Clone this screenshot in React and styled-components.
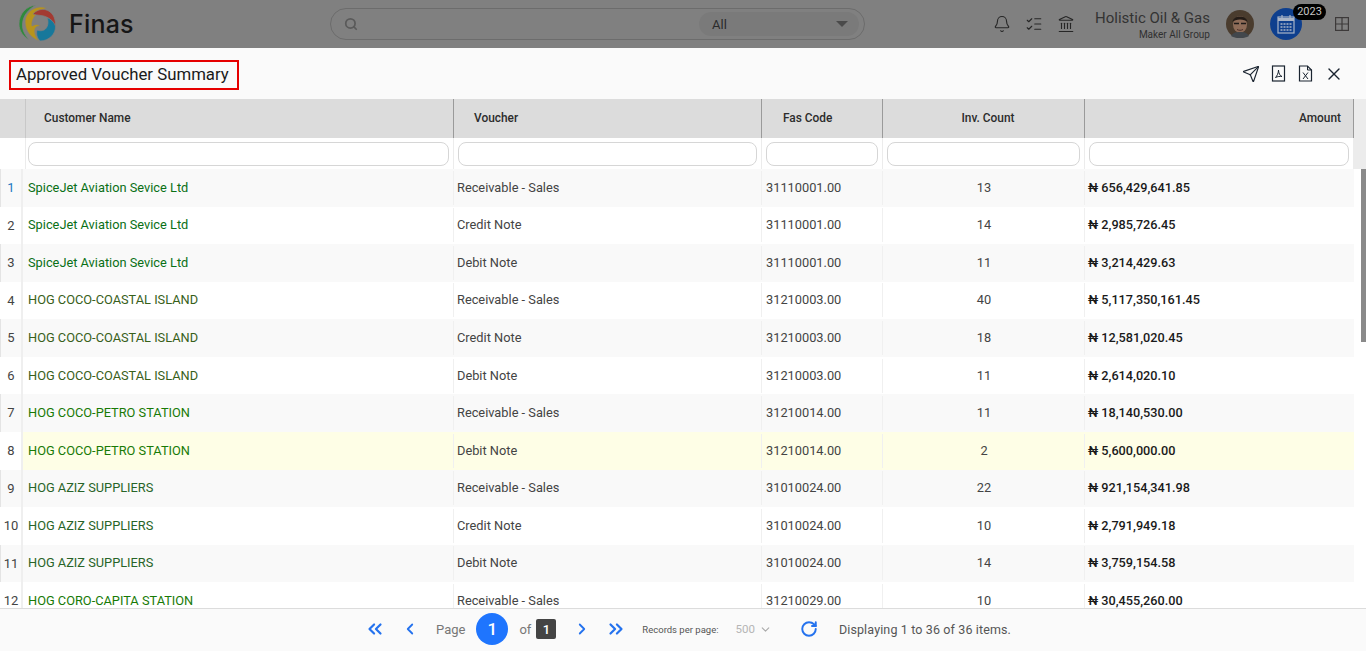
import React from "react";
import styled, { createGlobalStyle } from "styled-components";
import {
  Bell,
  ListChecks,
  Landmark,
  Search,
  ChevronDown,
  ChevronsLeft,
  ChevronLeft,
  ChevronRight,
  ChevronsRight,
  RotateCw,
  Send,
  X,
} from "lucide-react";

const GlobalStyle = createGlobalStyle`
  html, body, #root {
    margin: 0;
    height: 100%;
  }
  body {
    font-family: Roboto, "Liberation Sans", sans-serif;
    overflow: hidden;
    background: #fff;
  }
`;

const Page = styled.div`
  height: 100vh;
  display: flex;
  flex-direction: column;
`;

// top bar (dimmed by the open modal)
const TopBar = styled.header`
  height: 48px;
  flex: none;
  background: #808080;
  display: flex;
  align-items: center;
`;

const Brand = styled.div`
  width: 330px;
  flex: none;
  display: flex;
  align-items: center;
  gap: 13px;
  padding-left: 18px;
  box-sizing: border-box;
`;

const LogoMark = styled.svg`
  width: 38px;
  height: 38px;
  margin-top: -2px;
`;

const BrandName = styled.span`
  font-family: Inter, "Open Sans", sans-serif;
  font-size: 25px;
  font-weight: 500;
  letter-spacing: 0.2px;
  color: #161616;
`;

const SearchBar = styled.div`
  width: 535px;
  height: 32px;
  flex: none;
  box-sizing: border-box;
  border: 1px solid #6c6c6c;
  border-radius: 16px;
  display: flex;
  align-items: center;
  justify-content: space-between;
  padding: 0 5px 0 13px;
`;

const ScopeSelect = styled.div`
  width: 160px;
  height: 24px;
  box-sizing: border-box;
  border-radius: 12px;
  background: #7a7a7a;
  display: flex;
  align-items: center;
  justify-content: space-between;
  padding: 0 11px 0 13px;
  font-size: 13px;
  color: #2b2b2b;
`;

const Caret = styled.span`
  width: 0;
  height: 0;
  border-left: 6px solid transparent;
  border-right: 6px solid transparent;
  border-top: 6px solid #4a4a4a;
`;

const TopIcons = styled.div`
  margin-left: 128px;
  display: flex;
  align-items: center;
  gap: 14px;
  color: #262626;
`;

const UserInfo = styled.div`
  width: 130px;
  margin-left: 5px;
  padding-top: 2px;
  text-align: right;
`;

const UserName = styled.div`
  font-size: 15px;
  line-height: 18px;
  color: #333;
  white-space: nowrap;
`;

const UserRole = styled.div`
  font-size: 10px;
  line-height: 12px;
  margin-top: 2px;
  color: #303030;
`;

const Avatar = styled.svg`
  width: 28px;
  height: 28px;
  margin-left: 16px;
  flex: none;
`;

const YearButton = styled.div`
  position: relative;
  width: 32px;
  height: 32px;
  margin-left: 16px;
  flex: none;
  border-radius: 50%;
  background: #0e3f8e;
  display: flex;
  align-items: center;
  justify-content: center;
`;

const YearBadge = styled.span`
  position: absolute;
  top: -4px;
  left: 23px;
  width: 33px;
  height: 16px;
  border-radius: 8px;
  background: #000;
  color: #c4c4c4;
  font-size: 11px;
  line-height: 16px;
  text-align: center;
`;

const AppsIcon = styled.svg`
  width: 14px;
  height: 14px;
  margin-left: 33px;
  flex: none;
`;

// modal title
const TitleBar = styled.div`
  height: 51px;
  flex: none;
  box-sizing: border-box;
  background: #fafafa;
  display: flex;
  align-items: center;
  justify-content: space-between;
  padding: 0 22px 0 9px;
`;

const Title = styled.h1`
  margin: 2px 0 0;
  box-sizing: border-box;
  height: 30px;
  width: 230px;
  border: 2px solid #e60000;
  padding-left: 5px;
  font-size: 16.8px;
  font-weight: 400;
  line-height: 24px;
  white-space: nowrap;
  color: #1a1a1a;
`;

const Actions = styled.div`
  display: flex;
  align-items: center;
  gap: 10px;
  color: #1a2430;
`;

const FileIcon = styled.svg`
  width: 17px;
  height: 17px;
`;

// grid
const GridWrap = styled.div`
  flex: 1;
  min-height: 0;
  display: flex;
`;

const Grid = styled.div`
  width: 1354px;
  flex: none;
  display: flex;
  flex-direction: column;
  min-height: 0;
`;

const HeadRow = styled.div`
  height: 39px;
  flex: none;
  display: grid;
  grid-template-columns: 26px 428px 308px 121px 202px 269px;
  background: #dcdcdc;
`;

const HeadCell = styled.div`
  box-sizing: border-box;
  border-right: 1px solid ${(p) => (p.$first ? "#c8c8c8" : "#9a9a9a")};
  font-size: 11.9px;
  font-weight: 500;
  line-height: 38px;
  color: #2c2c2c;
  text-align: ${(p) => p.$align || "left"};
  padding-left: ${(p) => p.$pl || 0}px;
  padding-right: ${(p) => p.$pr || 0}px;
`;

const FilterRow = styled(HeadRow)`
  height: 31px;
  background: #fff;
`;

const FilterCell = styled.div`
  box-sizing: border-box;
  border-right: 1px solid #ececec;
  padding: 4px 4px 0 ${(p) => p.$pl || 4}px;
`;

const FilterInput = styled.input`
  display: block;
  width: 100%;
  height: 24px;
  box-sizing: border-box;
  border: 1px solid #d6d6d6;
  border-radius: 8px;
  background: #fff;
  outline: none;
`;

const Body = styled.div`
  flex: 1;
  min-height: 0;
  overflow: hidden;
`;

const Row = styled.div`
  height: 37.57px;
  display: grid;
  grid-template-columns: 23px 431px 308px 121px 202px 269px;
  align-items: center;
  font-size: 12.8px;
  color: #444;
  background: ${(p) => (p.$active ? "#fefee6" : p.$odd ? "#f9f9f9" : "#fff")};
`;

const IndexCell = styled.div`
  height: 100%;
  box-sizing: border-box;
  background: ${(p) => (p.$odd ? "#f9f9f9" : "#fff")};
  border-left: 1px solid ${(p) => (p.$odd ? "#e4e4e4" : "transparent")};
  border-right: 2px solid #efefef;
  color: ${(p) => (p.$first ? "#1a78c2" : "#444")};
  line-height: 37px;
  text-align: center;
  font-size: 13px;
`;

const Cell = styled.div`
  height: 34px;
  box-sizing: border-box;
  line-height: 34px;
  white-space: nowrap;
  border-right: 1px solid ${(p) => (p.$last ? "transparent" : "#f0f0f0")};
  padding-left: ${(p) => p.$pl || 3}px;
  text-align: ${(p) => p.$align || "left"};
`;

const NameCell = styled(Cell)`
  color: ${(p) => p.$tone};
  padding-left: 5px;
`;

const AmountCell = styled(Cell)`
  color: #1a1a1a;
  font-size: 12.7px;
  font-weight: 500;
`;

const ScrollTrack = styled.div`
  flex: 1;
  display: flex;
  flex-direction: column;
  align-items: flex-end;
  background: #fff;
`;

const ScrollHead = styled.div`
  width: 100%;
  height: 70px;
  flex: none;
  background: #ececec;
`;

const ScrollThumb = styled.div`
  width: 5px;
  height: 173px;
  background: #8a8a8a;
`;

// pager
const Pager = styled.footer`
  height: 43px;
  flex: none;
  box-sizing: border-box;
  border-top: 1px solid #dcdcdc;
  background: #fafafa;
  display: flex;
  align-items: center;
  padding: 0 0 2px 364px;
  color: #777;
  font-size: 13px;
`;

const PagerIcon = styled.span`
  display: flex;
  color: #2472ee;
  margin-left: ${(p) => p.$ml || 0}px;
`;

const PageLabel = styled.span`
  margin-left: ${(p) => p.$ml || 0}px;
`;

const PageCurrent = styled.span`
  width: 32px;
  height: 32px;
  margin-left: 11px;
  border-radius: 50%;
  background: #1f75fe;
  color: #fff;
  font-size: 17px;
  font-weight: 500;
  display: flex;
  align-items: center;
  justify-content: center;
`;

const PageTotal = styled.span`
  width: 20px;
  height: 20px;
  margin-left: 5px;
  border-radius: 2px;
  background: #444;
  color: #fff;
  font-size: 13px;
  font-weight: 500;
  display: flex;
  align-items: center;
  justify-content: center;
`;

const PerPageLabel = styled.span`
  margin-left: 15px;
  font-size: 9.5px;
  color: #555;
`;

const PerPageValue = styled.span`
  margin-left: 17px;
  font-size: 11.5px;
  color: #b5b5b5;
  display: flex;
  align-items: center;
  gap: 4px;
`;

const Summary = styled.span`
  margin-left: 21px;
  font-size: 12.5px;
  letter-spacing: 0.13px;
  color: #555;
`;

const GREEN = "#0a7016";
const OLIVE = "#38601a";
const BRIGHT = "#187a06";
const MOSS = "#286428";

const rows = [
  ["SpiceJet Aviation Sevice Ltd", GREEN, "Receivable - Sales", "31110001.00", 13, "656,429,641.85"],
  ["SpiceJet Aviation Sevice Ltd", GREEN, "Credit Note", "31110001.00", 14, "2,985,726.45"],
  ["SpiceJet Aviation Sevice Ltd", GREEN, "Debit Note", "31110001.00", 11, "3,214,429.63"],
  ["HOG COCO-COASTAL ISLAND", OLIVE, "Receivable - Sales", "31210003.00", 40, "5,117,350,161.45"],
  ["HOG COCO-COASTAL ISLAND", OLIVE, "Credit Note", "31210003.00", 18, "12,581,020.45"],
  ["HOG COCO-COASTAL ISLAND", OLIVE, "Debit Note", "31210003.00", 11, "2,614,020.10"],
  ["HOG COCO-PETRO STATION", BRIGHT, "Receivable - Sales", "31210014.00", 11, "18,140,530.00"],
  ["HOG COCO-PETRO STATION", BRIGHT, "Debit Note", "31210014.00", 2, "5,600,000.00"],
  ["HOG AZIZ SUPPLIERS", MOSS, "Receivable - Sales", "31010024.00", 22, "921,154,341.98"],
  ["HOG AZIZ SUPPLIERS", MOSS, "Credit Note", "31010024.00", 10, "2,791,949.18"],
  ["HOG AZIZ SUPPLIERS", MOSS, "Debit Note", "31010024.00", 14, "3,759,154.58"],
  ["HOG CORO-CAPITA STATION", BRIGHT, "Receivable - Sales", "31210029.00", 10, "30,455,260.00"],
];

const Logo = () => (
  <LogoMark viewBox="0 0 38 38" stroke="#808080" strokeWidth=".7">
    <path d="M18 1C8 2 1 10 1 20c0 7 4 12 10 16-4-5-7-10-6.500-16C5 11 11 5 18 1Z" fill="#2f8a3c" />
    <path d="M29 4C18 0 7 8 7 18c0 9 6 16 14 19-3-4-5-8-4-12 1-3 4-3 6-3-3-2-6-2-9 0-1-7 5-15 15-18Z" fill="#b8941c" />
    <path d="M15 10c6-7 17-6 21 3 1.500 4 2 8 1 11-2-7-7-12-14-12.500-3-.5-6-.5-8-1.500Z" fill="#a33a32" />
    <path d="M22 37c9 0 16-7 15.500-15-1.500-4-4.500-7-8.500-8.500 2 4.500 1 10.500-3 12.500-2 1-5 1-7 0-1 4 0 8 3 11Z" fill="#17789b" />
  </LogoMark>
);

const CalendarIcon = () => (
  <svg width="18" height="20" viewBox="0 0 18 20" fill="none" stroke="#a9b4c6">
    <rect x="1" y="3" width="16" height="16" strokeWidth="1.200" />
    <path d="M1 5.500h16" strokeWidth="3" />
    <path d="M5 1v3M13 1v3" strokeWidth="1.200" />
    <path d="M3.500 10h11M3.500 13h11M3.500 16h11" strokeWidth="1.500" strokeDasharray="2 1" />
  </svg>
);

const PdfIcon = () => (
  <FileIcon viewBox="0 0 17 17" fill="none" stroke="currentColor">
    <rect x="2.500" y="1" width="12" height="15" strokeWidth="1.200" />
    <path d="M5.500 12.500C7 11 8.500 8 8.500 5c0 3 1.500 6 3.500 6.500-2-.3-4.500 0-6.500 1Z" strokeWidth="1" />
  </FileIcon>
);

const ExcelIcon = () => (
  <FileIcon viewBox="0 0 17 17" fill="none" stroke="currentColor">
    <path d="M2.500 1h8l4 4v11h-12Z" strokeWidth="1.200" />
    <path d="M10.500 1v4h4" strokeWidth="1" />
    <path d="M6 7.500l5 6.500M11 7.500l-5 6.500" strokeWidth="1" />
  </FileIcon>
);

function App() {
  return (
    <Page>
      <GlobalStyle />
      <TopBar>
        <Brand>
          <Logo />
          <BrandName>Finas</BrandName>
        </Brand>
        <SearchBar>
          <Search size={14} strokeWidth={3} color="#5a5a5a" />
          <ScopeSelect>
            All
            <Caret />
          </ScopeSelect>
        </SearchBar>
        <TopIcons>
          <Bell size={18} strokeWidth={1.5} />
          <ListChecks size={18} strokeWidth={1.5} />
          <Landmark size={18} strokeWidth={1.5} />
        </TopIcons>
        <UserInfo>
          <UserName>Holistic Oil &amp; Gas</UserName>
          <UserRole>Maker All Group</UserRole>
        </UserInfo>
        <Avatar viewBox="0 0 28 28">
          <circle cx="14" cy="14" r="14" fill="#4a3c2e" />
          <ellipse cx="14" cy="14.500" rx="7" ry="8.500" fill="#8e6c58" />
          <path d="M6.500 12C7 4.500 21 4.500 21.500 12 19 8.500 9 8.500 6.500 12Z" fill="#241c17" />
          <path d="M8 13.500h5M15 13.500h5" stroke="#1e1a18" strokeWidth="1.300" />
          <path d="M11 19.500c2 1 4 1 6 0" stroke="#4a2f28" strokeWidth="1" fill="none" />
          <path d="M5 26c2-3.500 5-4 9-4s7 .5 9 4c-2.500 1.500-5.500 2-9 2s-6.500-.5-9-2Z" fill="#42474c" />
        </Avatar>
        <YearButton>
          <CalendarIcon />
          <YearBadge>2023</YearBadge>
        </YearButton>
        <AppsIcon viewBox="0 0 14 14" fill="none" stroke="#3d3a3a" strokeWidth="1.200">
          <rect x=".6" y=".6" width="12.800" height="12.800" />
          <path d="M7 .6v12.800M.6 7h12.800" />
        </AppsIcon>
      </TopBar>

      <TitleBar>
        <Title>Approved Voucher Summary</Title>
        <Actions>
          <Send size={18} strokeWidth={1.5} />
          <PdfIcon />
          <ExcelIcon />
          <X size={20} strokeWidth={1.6} />
        </Actions>
      </TitleBar>

      <GridWrap>
        <Grid>
          <HeadRow>
            <HeadCell $first />
            <HeadCell $pl={18}>Customer Name</HeadCell>
            <HeadCell $pl={20}>Voucher</HeadCell>
            <HeadCell $pl={21}>Fas Code</HeadCell>
            <HeadCell $align="center" $pl={9}>Inv. Count</HeadCell>
            <HeadCell $align="right" $pr={12}>Amount</HeadCell>
          </HeadRow>
          <FilterRow>
            <FilterCell />
            <FilterCell $pl={2}><FilterInput /></FilterCell>
            <FilterCell><FilterInput /></FilterCell>
            <FilterCell><FilterInput /></FilterCell>
            <FilterCell><FilterInput /></FilterCell>
            <FilterCell><FilterInput /></FilterCell>
          </FilterRow>
          <Body>
            {rows.map((r, i) => {
              const odd = i % 2 === 0;
              return (
                <Row key={i} $odd={odd} $active={i === 7}>
                  <IndexCell $odd={odd} $first={i === 0}>{i + 1}</IndexCell>
                  <NameCell $tone={r[1]}>{r[0]}</NameCell>
                  <Cell>{r[2]}</Cell>
                  <Cell $pl={4}>{r[3]}</Cell>
                  <Cell $align="center" $pl={1}>{r[4]}</Cell>
                  <AmountCell $last>₦ {r[5]}</AmountCell>
                </Row>
              );
            })}
          </Body>
        </Grid>
        <ScrollTrack>
          <ScrollHead />
          <ScrollThumb />
        </ScrollTrack>
      </GridWrap>

      <Pager>
        <PagerIcon><ChevronsLeft size={22} strokeWidth={2.4} /></PagerIcon>
        <PagerIcon $ml={15}><ChevronLeft size={18} strokeWidth={2.4} /></PagerIcon>
        <PageLabel $ml={17}>Page</PageLabel>
        <PageCurrent>1</PageCurrent>
        <PageLabel $ml={11}>of</PageLabel>
        <PageTotal>1</PageTotal>
        <PagerIcon $ml={17}><ChevronRight size={18} strokeWidth={2.4} /></PagerIcon>
        <PagerIcon $ml={14}><ChevronsRight size={22} strokeWidth={2.4} /></PagerIcon>
        <PerPageLabel>Records per page:</PerPageLabel>
        <PerPageValue>
          500
          <ChevronDown size={13} color="#aaa" />
        </PerPageValue>
        <PagerIcon $ml={28}><RotateCw size={18} strokeWidth={2.6} /></PagerIcon>
        <Summary>Displaying 1 to 36 of 36 items.</Summary>
      </Pager>
    </Page>
  );
}

export default App;
